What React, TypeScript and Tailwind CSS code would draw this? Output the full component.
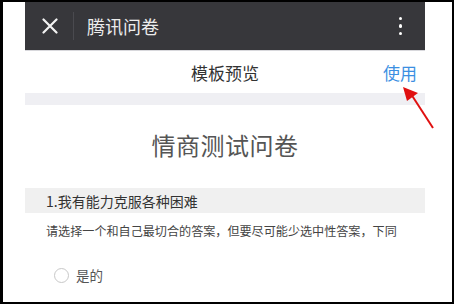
import React from 'react'

const font = { fontFamily: '"Noto Sans CJK SC", "Noto Sans", sans-serif' }

const App: React.FC = () => {
  return (
    <div className="relative w-[454px] h-[304px] bg-black pt-[2px] pl-[3px] pr-[2px] pb-[2px]" style={font}>
      <div className="w-full h-full bg-white pl-[22px] overflow-hidden">
        <div className="w-[400px] h-full flex flex-col">
          {/* top bar */}
          <div className="h-[48px] bg-[#37373b] flex items-center shrink-0">
            <div className="w-[48px] flex justify-center pl-[2px]">
              <svg width="16" height="16" viewBox="0 0 16 16">
                <path d="M1.5 1.5 L14.5 14.5 M14.5 1.5 L1.5 14.5" stroke="#f2f2f2" strokeWidth="2.2" strokeLinecap="round" />
              </svg>
            </div>
            <div className="w-px h-[28px] bg-[#4a4a4f]" />
            <span className="ml-[13px] text-[18px] text-[#ececec] leading-none">腾讯问卷</span>
            <div className="ml-auto mr-[23px] flex flex-col gap-[4px]">
              <span className="w-[3.5px] h-[3.5px] rounded-full bg-white" />
              <span className="w-[3.5px] h-[3.5px] rounded-full bg-white" />
              <span className="w-[3.5px] h-[3.5px] rounded-full bg-white" />
            </div>
          </div>
          <div className="h-px bg-[#d8d8dc] shrink-0" />
          {/* sub header */}
          <div className="h-[42px] flex items-center justify-center relative shrink-0">
            <span className="text-[17px] text-[#333] leading-none">模板预览</span>
            <span className="absolute right-[8px] text-[17px] text-[#3b8fe2] leading-none">使用</span>
          </div>
          <div className="h-[12px] bg-[#efeff3] shrink-0" />
          {/* title */}
          <div className="h-[83px] flex items-center justify-center pb-[4px] shrink-0">
            <span className="text-[24px] text-[#555] leading-none tracking-[0.5px]">情商测试问卷</span>
          </div>
          {/* question */}
          <div className="h-[25px] bg-[#f0f0f0] flex items-center pl-[21px] shrink-0">
            <span className="text-[14px] text-[#333] leading-none">1.我有能力克服各种困难</span>
          </div>
          <div className="pl-[21px] pt-[12px] text-[12.1px] text-[#444] leading-none whitespace-nowrap">
            请选择一个和自己最切合的答案，但要尽可能少选中性答案，下同
          </div>
          <div className="pl-[29px] pt-[31px] flex items-center gap-[7px]">
            <span className="w-[15px] h-[15px] rounded-full border border-[#c8c8c8] bg-white" />
            <span className="text-[13.5px] text-[#555] leading-none">是的</span>
          </div>
        </div>
      </div>
      {/* red arrow */}
      <svg className="absolute left-[398px] top-[82px]" width="40" height="50" viewBox="0 0 40 50">
        <path d="M35 46 L13 12" stroke="#e01010" strokeWidth="2" />
        <path d="M5 5 L20 11 L9 19 Z" fill="#e01010" />
      </svg>
    </div>
  )
}

export default App
